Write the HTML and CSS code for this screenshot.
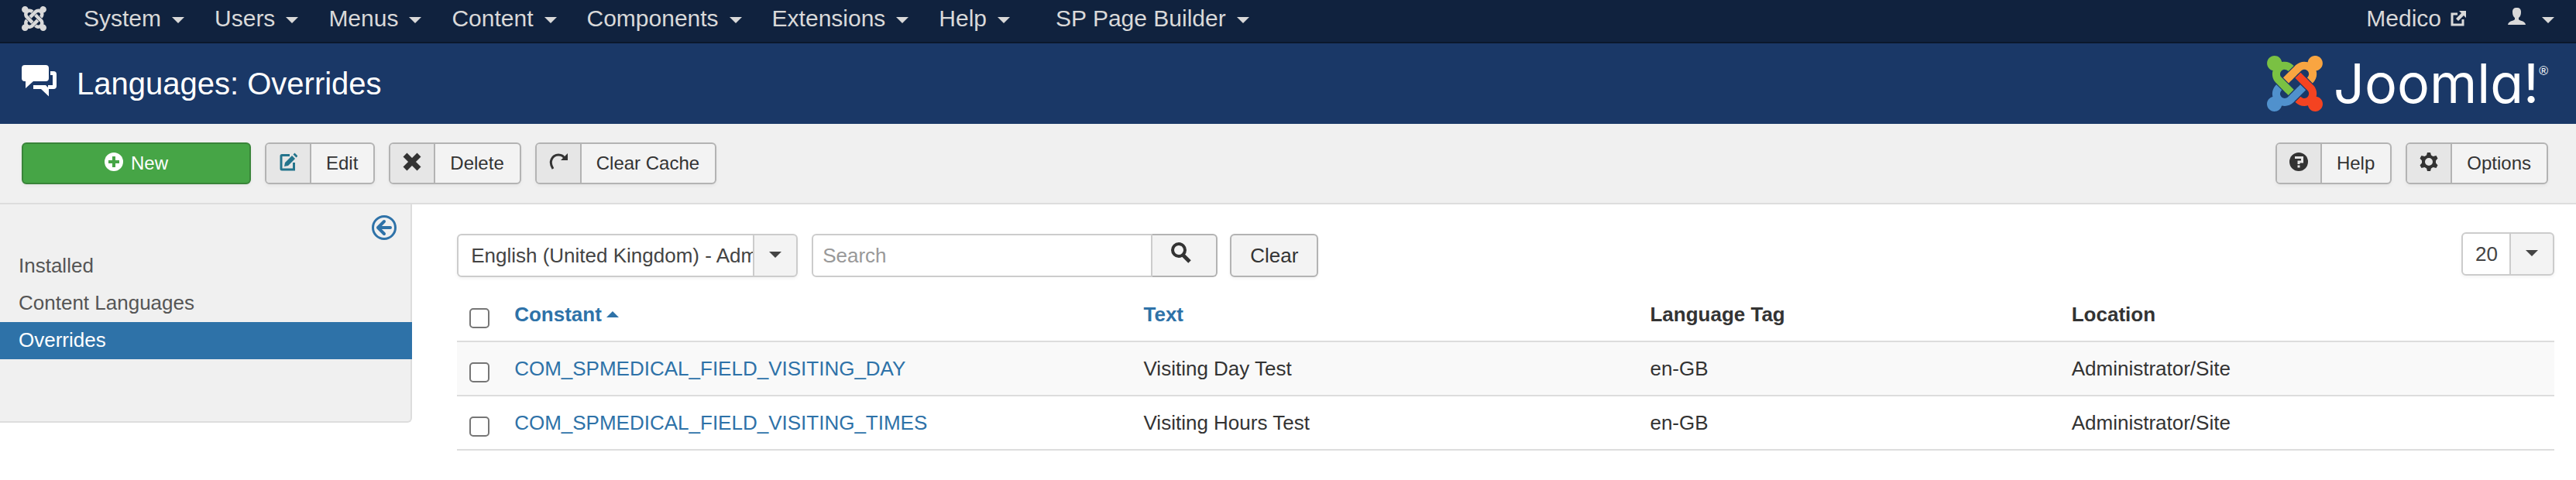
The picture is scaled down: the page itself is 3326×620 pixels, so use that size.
FILE: index.html
```html
<!DOCTYPE html>
<html lang="en">
<head>
<meta charset="utf-8">
<title>Languages: Overrides</title>
<link rel="stylesheet" href="styles.css">
</head>
<body>
<nav class="navbar">
  <a class="home" href="#" aria-label="Joomla"><svg width="32" height="32" viewBox="0 32 448 448" fill="currentColor"><path d="M.6 92.1C.6 58.8 27.4 32 60.4 32c30 0 54.5 21.9 59.2 50.2 32.6-7.6 67.1.6 96.5 30l-44.3 44.3c-20.5-20.5-42.6-16.3-55.4-3.5-14.3 14.3-14.3 37.9 0 52.2l99.5 99.5-44 44.3c-87.7-87.2-49.7-49.7-99.8-99.7-26.8-26.5-35-64.8-24.8-98.9C20.4 144.6.6 120.7.6 92.1zm129.5 116.4l44.3 44.3c10-10 89.7-89.7 99.7-99.8 14.3-14.3 37.6-14.3 51.9 0 12.8 12.8 17 35-3.5 55.4l44 44.3c31.2-31.2 38.5-67.6 28.9-101.2 29.2-4.1 51.9-29.2 51.9-59.5 0-33.2-26.8-60.1-59.8-60.1-30.3 0-55.4 22.5-59.5 51.6-33.8-9.9-71.7-1.5-98.3 25.1-18.3 19.1-71.1 71.5-99.6 99.9zm266.3 152.2c8.2-32.7-.9-68.5-26.3-93.9-11.8-12.2 5 4.7-99.5-99.7l-44.3 44.3 99.7 99.7c14.3 14.3 14.3 37.6 0 51.9-12.8 12.8-35 17-55.4-3.5l-44 44.3c27.6 30.2 68 38.8 102.7 28 5.5 27.4 29.7 48.1 58.9 48.1 33 0 59.8-26.8 59.8-60.1 0-30.2-22.5-55-51.6-59.1zm-84.3-53.1l-44-44.3c-87 86.4-50.4 50.4-99.7 99.8-14.3 14.3-37.6 14.3-51.9 0-13.1-13.4-16.9-35.3 3.2-55.4l-44-44.3c-30.2 30.2-38 65.2-29.5 98.3-26.7 6-46.2 29.9-46.2 58.2C0 453.2 26.8 480 59.8 480c28.6 0 52.5-19.8 58.6-46.7 32.7 8.2 68.5-.6 94.2-26 32.1-32.2 12.2-12.2 99.5-99.7z"/></svg></a>
  <ul class="menu">
    <li><a href="#">System<span class="caret"></span></a></li>
    <li><a href="#">Users<span class="caret"></span></a></li>
    <li><a href="#">Menus<span class="caret"></span></a></li>
    <li><a href="#">Content<span class="caret"></span></a></li>
    <li><a href="#">Components<span class="caret"></span></a></li>
    <li><a href="#">Extensions<span class="caret"></span></a></li>
    <li><a href="#">Help<span class="caret"></span></a></li>
    <li class="extra"><a href="#">SP Page Builder<span class="caret"></span></a></li>
  </ul>
  <div class="account">
    <a class="site" href="#">Medico<svg width="20" height="20" viewBox="0 0 20 20"><path d="M9 4H2v14h14v-7" fill="none" stroke="currentColor" stroke-width="3"/><path d="M11 0h9v9l-3-3-7 7-3-3 7-7z" fill="currentColor"/></svg></a>
    <a class="user" href="#" aria-label="User menu"><svg width="23" height="22" viewBox="0 0 23 22" fill="currentColor"><path d="M11.500 0c4 0 5.500 2 5.500 5.500 0 3.500-1 6-3 7.500v1.500c0 1 1 1.500 3 2.200 3.500 1.100 5.500 2.300 6 5.300H0c.5-3 2.500-4.200 6-5.300 2-.7 3-1.200 3-2.200V13C7 11.500 6 9 6 5.500 6 2 7.500 0 11.500 0z"/></svg><span class="caret"></span></a>
  </div>
</nav>

<header class="header">
  <svg class="title-icon" width="46" height="41" viewBox="0 0 46 41" fill="#fff"><path d="M4 0h27a4 4 0 0 1 4 4v13a4 4 0 0 1-4 4H15L5 30v-9H4a4 4 0 0 1-4-4V4a4 4 0 0 1 4-4z"/><path d="M37 8h4a4 4 0 0 1 4 4v15a4 4 0 0 1-4 4h-6v9.500L25 31H15v-5h16l3 3v-3h6V13h-3z"/></svg>
  <h1>Languages: Overrides</h1>
  <div class="brand">
    <svg width="72" height="72" viewBox="0 32 448 448"><path fill="#7ac143" d="M.6 92.1C.6 58.800 27.400 32 60.400 32c30 0 54.500 21.900 59.200 50.200 32.600-7.600 67.100.6 96.500 30l-44.300 44.300c-20.500-20.500-42.600-16.300-55.400-3.500-14.300 14.300-14.300 37.900 0 52.200l99.500 99.500-44 44.300c-87.700-87.200-49.700-49.700-99.800-99.700-26.800-26.500-35-64.800-24.800-98.900C20.400 144.600.6 120.700.6 92.100z"/><path fill="#f9a541" d="M130.1 208.500l44.300 44.300c10-10 89.700-89.700 99.700-99.800 14.300-14.300 37.600-14.300 51.900 0 12.800 12.800 17 35-3.500 55.400l44 44.300c31.200-31.200 38.500-67.600 28.900-101.200 29.200-4.100 51.900-29.200 51.900-59.500 0-33.200-26.800-60.100-59.800-60.100-30.300 0-55.400 22.500-59.500 51.600-33.800-9.900-71.700-1.500-98.300 25.100-18.300 19.100-71.100 71.500-99.600 99.900z"/><path fill="#f44321" d="M396.400 360.700c8.200-32.700-.9-68.500-26.300-93.900-11.800-12.200 5 4.700-99.500-99.700l-44.300 44.300 99.700 99.700c14.300 14.300 14.300 37.600 0 51.900-12.800 12.800-35 17-55.400-3.500l-44 44.300c27.600 30.200 68 38.800 102.700 28 5.500 27.400 29.700 48.100 58.900 48.100 33 0 59.800-26.800 59.800-60.100 0-30.200-22.500-55-51.600-59.100z"/><path fill="#5091cd" d="M312.100 307.600l-44-44.300c-87 86.400-50.400 50.400-99.700 99.800-14.300 14.300-37.600 14.300-51.900 0-13.100-13.400-16.900-35.300 3.200-55.400l-44-44.300c-30.200 30.200-38 65.200-29.500 98.300-26.700 6-46.200 29.900-46.200 58.200C0 453.200 26.800 480 59.800 480c28.600 0 52.500-19.800 58.600-46.700 32.700 8.200 68.500-.6 94.200-26 32.100-32.200 12.200-12.200 99.500-99.700z"/></svg>
    <span class="wordmark">Joomla!</span><span class="reg">®</span>
  </div>
</header>

<div class="toolbar">
  <button class="new" type="button"><svg width="24" height="24" viewBox="0 0 24 24"><circle cx="12" cy="12" r="12" fill="#fff"/><path d="M12 5v14M5 12h14" stroke="#46a546" stroke-width="4"/></svg>New</button>
  <button class="tool" type="button"><span class="ico teal"><svg width="24" height="24" viewBox="0 0 24 24"><path d="M14 3.500H4a1 1 0 0 0-1 1V21a1 1 0 0 0 1 1h15.500V13" fill="none" stroke="currentColor" stroke-width="3"/><path d="M7 18l1-5 9-9 4 4-9 9zM18.500 2.500L20.500 0.500l4 4-2 2z" fill="currentColor"/></svg></span><span class="lbl">Edit</span></button>
  <button class="tool" type="button"><span class="ico"><svg width="24" height="24" viewBox="0 0 24 24"><path d="M3 3l18 18M21 3L3 21" stroke="currentColor" stroke-width="7"/></svg></span><span class="lbl">Delete</span></button>
  <button class="tool" type="button"><span class="ico"><svg width="24" height="24" viewBox="0 0 24 24"><path d="M5 21C-1 12 4 3 12 3c4 0 7 2 8 5" fill="none" stroke="currentColor" stroke-width="3"/><path d="M24 1v9h-9z" fill="currentColor"/></svg></span><span class="lbl">Clear Cache</span></button>
  <span class="spacer"></span>
  <button class="tool" type="button"><span class="ico"><svg width="24" height="24" viewBox="0 0 24 24"><circle cx="12" cy="12" r="12" fill="currentColor"/><path d="M7 6.500h9.500v5.500h-4.500v3M12 16.500v3" fill="none" stroke="#e6e6e6" stroke-width="3"/></svg></span><span class="lbl">Help</span></button>
  <button class="tool" type="button"><span class="ico"><svg width="24" height="24" viewBox="0 0 24 24"><path fill="currentColor" fill-rule="evenodd" d="M10 0h4l1 3.500 2.500 1.500 4-1 2 3.500L21 10.500v3l2.500 3-2 3.500-4-1-2.500 1.500L14 24h-4l-1-3.500L6.500 19l-4 1-2-3.500L3 13.500v-3L.5 7.500 2.500 4l4 1L9 3.500zM12 7a5 5 0 1 0 0 10 5 5 0 0 0 0-10z"/></svg></span><span class="lbl">Options</span></button>
</div>

<div class="content">
  <aside class="sidebar">
    <button class="collapse" type="button" aria-label="Hide the sidebar"><svg width="32" height="32" viewBox="0 0 32 32" fill="none" stroke="currentColor"><circle cx="16" cy="16" r="14.500" stroke-width="3"/><path d="M24 16H8M16 8l-8 8 8 8" stroke-width="4" stroke-linecap="round" stroke-linejoin="round"/></svg></button>
    <ul class="links">
      <li><a href="#">Installed</a></li>
      <li><a href="#">Content Languages</a></li>
      <li class="active"><a href="#">Overrides</a></li>
    </ul>
  </aside>
  <main class="main">
    <div class="filters">
      <div class="pick client"><select aria-label="Language"><option>English (United Kingdom) - Administrator</option></select></div>
      <form class="search"><input type="text" placeholder="Search" aria-label="Search"><button type="button" aria-label="Search"><svg width="26" height="27" viewBox="0 0 26 27" fill="none" stroke="currentColor"><circle cx="10" cy="10" r="8" stroke-width="4"/><path d="M15 16l9 9" stroke-width="5"/></svg></button></form>
      <button class="clear" type="button">Clear</button>
      <span class="spacer"></span>
      <div class="pick limit"><select aria-label="Items per page"><option>20</option></select></div>
    </div>
    <table class="list">
      <thead>
        <tr><th class="check"><input type="checkbox" aria-label="Check all"></th><th class="constant"><a href="#">Constant<span class="caret up"></span></a></th><th class="text"><a href="#">Text</a></th><th class="tag">Language Tag</th><th>Location</th></tr>
      </thead>
      <tbody>
        <tr><td><input type="checkbox" aria-label="Select COM_SPMEDICAL_FIELD_VISITING_DAY"></td><td><a href="#">COM_SPMEDICAL_FIELD_VISITING_DAY</a></td><td>Visiting Day Test</td><td>en-GB</td><td>Administrator/Site</td></tr>
        <tr><td><input type="checkbox" aria-label="Select COM_SPMEDICAL_FIELD_VISITING_TIMES"></td><td><a href="#">COM_SPMEDICAL_FIELD_VISITING_TIMES</a></td><td>Visiting Hours Test</td><td>en-GB</td><td>Administrator/Site</td></tr>
      </tbody>
    </table>
  </main>
</div>
</body>
</html>
```
FILE: styles.css
```css
* { box-sizing: border-box; }
body {
  margin: 0;
  background: #fff;
  color: #333;
  font: 26px/36px "Liberation Sans", Arial, sans-serif;
}
a { color: #2e72a8; text-decoration: none; }
ul { list-style: none; margin: 0; padding: 0; }
button, input, select { font: inherit; color: inherit; margin: 0; }
svg { display: block; flex: none; }
.spacer { flex: 1; }
.caret {
  display: inline-block;
  border: 8px solid transparent;
  border-top-color: currentColor;
  border-bottom: 0;
}
.caret.up {
  border-top: 0;
  border-bottom: 8px solid currentColor;
  margin-left: 6px;
  vertical-align: middle;
  margin-bottom: 4px;
}

.navbar {
  display: flex;
  align-items: flex-start;
  padding: 0 28px;
  height: 56px;
  background: #10223e;
  border-bottom: 2px solid #0b182c;
  font-size: 30px;
  line-height: 48px;
}
.navbar a { display: flex; align-items: center; color: #d9d9d9; }
.navbar .home { height: 48px; margin-right: 48px; }
.menu { display: flex; gap: 39px; }
.menu .extra { margin-left: 20px; }
.menu .caret { margin: 4px 0 0 14px; }
.account { display: flex; margin-left: auto; }
.site svg { margin-left: 12px; }
.user { margin-left: 54px; }
.user svg { margin-bottom: 6px; }
.user .caret { margin: 4px 0 0 21px; }

.header {
  display: flex;
  align-items: center;
  height: 104px;
  padding: 0 36px 0 28px;
  background: #1a3867;
  color: #fff;
}
.title-icon { margin-bottom: 8px; }
.header h1 { margin: 0 0 0 25px; font-size: 40px; line-height: 48px; font-weight: 400; }
.brand { display: flex; margin-left: auto; }
.wordmark {
  margin-left: 14px;
  font-family: Inter, sans-serif;
  font-size: 70px;
  line-height: 72px;
  font-feature-settings: "cv11";
}
.reg { font-size: 16px; line-height: 40px; }

.toolbar {
  display: flex;
  gap: 18px;
  padding: 24px 36px 24px 28px;
  background: #f0f0f0;
  border-bottom: 2px solid #ddd;
}
.toolbar button {
  display: flex;
  height: 54px;
  padding: 0;
  border-radius: 6px;
  font-size: 24px;
  line-height: 50px;
  box-shadow: 0 2px 4px rgba(0, 0, 0, .05);
}
.toolbar svg { margin-bottom: 4px; }
.toolbar .new {
  align-items: center;
  justify-content: center;
  gap: 10px;
  width: 296px;
  border: 2px solid #398439;
  background: #46a546;
  color: #fff;
}
.tool { border: 2px solid #b3b3b3; background: #f3f3f3; overflow: hidden; }
.ico {
  display: flex;
  align-items: center;
  justify-content: center;
  width: 58px;
  height: 50px;
  border-right: 2px solid #b3b3b3;
  background: #e6e6e6;
}
.teal { color: #24748c; }
.lbl { padding: 0 20px 0 19px; }

.content { display: flex; align-items: flex-start; }
.sidebar {
  width: 16%;
  padding: 14px 0 80px;
  background: #f0f0f0;
  border: solid #ddd;
  border-width: 0 2px 2px 0;
  border-radius: 0 0 6px 0;
}
.collapse {
  display: block;
  margin: 0 18px 10px auto;
  padding: 0;
  border: 0;
  background: none;
  color: #2e72a8;
}
.links a { display: block; padding: 5px 24px 7px; color: #555; }
.links .active { margin-right: -2px; background: #2e72a8; }
.links .active a { color: #fff; }

.main { flex: 1; padding: 36px 28px 36px 58px; }
.filters { display: flex; align-items: flex-start; }
.pick { position: relative; margin-top: 2px; }
.pick select {
  appearance: none;
  width: 100%;
  height: 56px;
  padding: 0 56px 0 16px;
  border: 2px solid #ccc;
  border-radius: 6px;
  background: linear-gradient(to right, #ccc 2px, #f3f3f3 2px) right / 56px 100% no-repeat #fff;
  box-shadow: 0 2px 4px rgba(0, 0, 0, .05);
  color: #444;
}
.pick::after {
  content: "";
  position: absolute;
  top: 23px;
  right: 21px;
  border: 8px solid transparent;
  border-top-color: #444;
  border-bottom: 0;
  pointer-events: none;
}
.client { width: 440px; margin-right: 18px; }
.limit { width: 120px; margin-top: 0; }
.search { display: flex; width: 524px; margin: 2px 16px 0 0; }
.search input {
  flex: 1;
  min-width: 0;
  height: 56px;
  padding: 0 12px;
  border: 2px solid #ccc;
  border-radius: 6px 0 0 6px;
  background: #fff;
}
.search input::placeholder { color: #999; opacity: 1; }
.search button {
  display: flex;
  justify-content: center;
  width: 84px;
  padding: 9px 8px 0 0;
  border: 2px solid #b3b3b3;
  border-left: 0;
  border-radius: 0 6px 6px 0;
  background: #f3f3f3;
}
.clear {
  height: 56px;
  margin-top: 2px;
  padding: 0 24px;
  border: 2px solid #b3b3b3;
  border-radius: 6px;
  background: #f3f3f3;
  box-shadow: 0 2px 4px rgba(0, 0, 0, .05);
}

.list { width: 100%; margin-top: 14px; border-collapse: separate; border-spacing: 0; table-layout: fixed; }
.list th, .list td { padding: 16px; text-align: left; vertical-align: top; }
.list td { border-top: 2px solid #ddd; }
.list tr:last-child td { border-bottom: 2px solid #ddd; }
.list tbody tr:nth-child(odd) { background: #f9f9f9; }
.list .check { width: 58px; }
.list .constant { width: 30%; }
.list .text { width: 24.15%; }
.list .tag { width: 20.1%; }
.list input {
  appearance: none;
  display: block;
  width: 26px;
  height: 26px;
  margin-top: 10px;
  border: 2px solid #767676;
  border-radius: 5px;
  background: #fff;
}
```
